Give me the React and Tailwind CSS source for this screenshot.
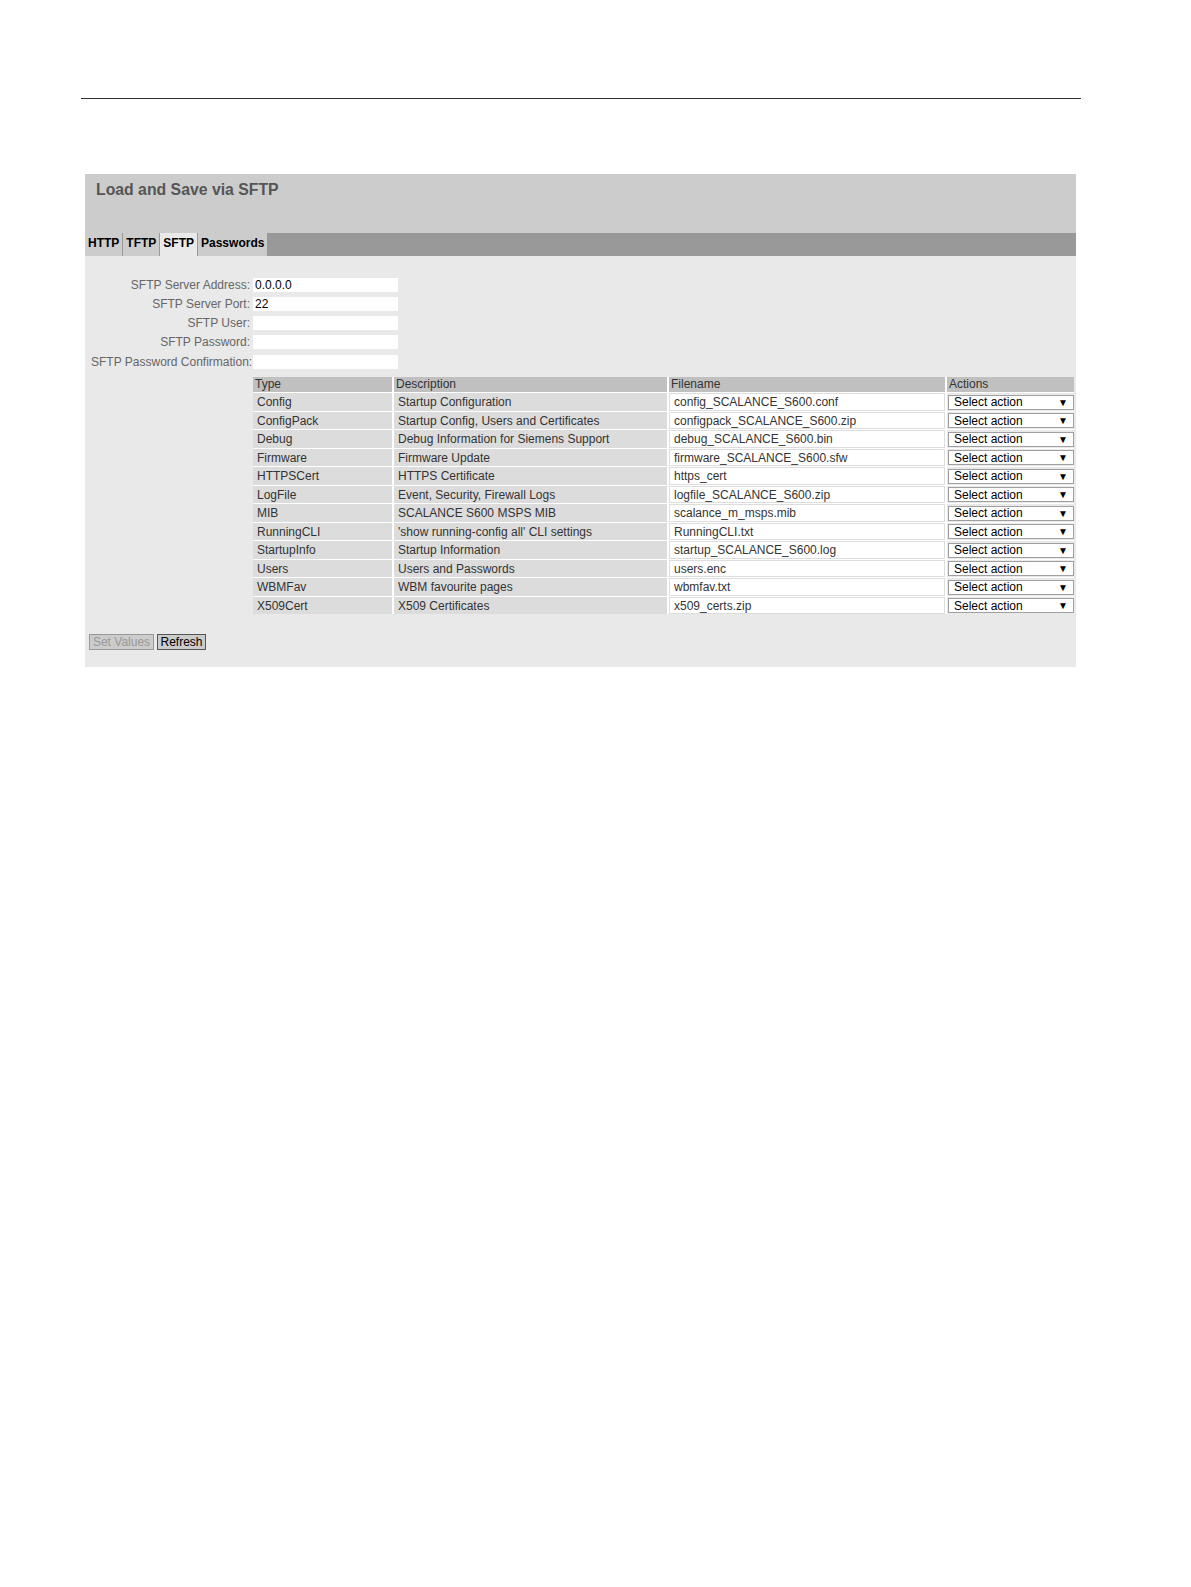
const rows = [
  ["Config", "Startup Configuration", "config_SCALANCE_S600.conf"],
  ["ConfigPack", "Startup Config, Users and Certificates", "configpack_SCALANCE_S600.zip"],
  ["Debug", "Debug Information for Siemens Support", "debug_SCALANCE_S600.bin"],
  ["Firmware", "Firmware Update", "firmware_SCALANCE_S600.sfw"],
  ["HTTPSCert", "HTTPS Certificate", "https_cert"],
  ["LogFile", "Event, Security, Firewall Logs", "logfile_SCALANCE_S600.zip"],
  ["MIB", "SCALANCE S600 MSPS MIB", "scalance_m_msps.mib"],
  ["RunningCLI", "'show running-config all' CLI settings", "RunningCLI.txt"],
  ["StartupInfo", "Startup Information", "startup_SCALANCE_S600.log"],
  ["Users", "Users and Passwords", "users.enc"],
  ["WBMFav", "WBM favourite pages", "wbmfav.txt"],
  ["X509Cert", "X509 Certificates", "x509_certs.zip"],
]

const fields = [
  ["SFTP Server Address:", "0.0.0.0"],
  ["SFTP Server Port:", "22"],
  ["SFTP User:", ""],
  ["SFTP Password:", ""],
  ["SFTP Password Confirmation:", ""],
]

function App() {
  return (
    <div className="w-full bg-white font-['Liberation_Sans',Arial,sans-serif]">
      <div className="pt-[98px] pl-[81px]">
        <div className="w-[1000px] h-px bg-[#333]" />
      </div>

      {/* Panel */}
      <div className="mt-[75px] ml-[85px] w-[991px]">
        <div className="h-[59px] bg-[#cccccc] pl-[11px] pt-[4px]">
          <h1 className="text-[15.8px] font-bold text-[#555]">Load and Save via SFTP</h1>
        </div>

        <div className="h-[23px] bg-[#999999] flex gap-[1px] text-[12px] font-bold text-black">
          {["HTTP", "TFTP", "SFTP", "Passwords"].map((t) => (
            <div key={t}
              className={(t === "SFTP" ? "bg-[#e9e9e9]" : "bg-[#cccccc]") + " h-full px-[3px] pt-[3px] leading-[14px]"}>
              {t}
            </div>
          ))}
        </div>

        <div className="bg-[#e9e9e9] pt-[19px] pb-[17px]">
          {/* Form */}
          <div className="flex flex-col">
            {fields.map(([label, val]) => (
              <div key={label} className="h-[19.25px] flex items-center">
                <span className="w-[165px] pl-[6px] text-right text-[12px] text-[#666] whitespace-nowrap">{label}</span>
                <div className="ml-[3px] w-[145px] h-[14px] bg-white text-[12px] text-black leading-[14px] pl-[2px]">{val}</div>
              </div>
            ))}
          </div>

          {/* Table */}
          <div className="ml-[168px] mt-[6px] w-[821px] bg-white grid grid-cols-[139px_273px_276px_127px] gap-x-[2px] gap-y-[1px] text-[12px] text-[#333]">
            {["Type", "Description", "Filename", "Actions"].map((h) => (
              <div key={h} className="bg-[#c0c0c0] h-[15px] leading-[15px] pl-[2px]">{h}</div>
            ))}
            {rows.map(([type, desc, file]) => (
              <>
                <div key={type + "t"} className="bg-[#dcdcdc] h-[17.5px] flex items-center pl-[4px]">{type}</div>
                <div key={type + "d"} className="bg-[#dcdcdc] h-[17.5px] flex items-center pl-[4px]">{desc}</div>
                <div key={type + "f"} className="bg-white h-[17.5px] flex items-center pl-[4px] border border-[#ddd]">{file}</div>
                <div key={type + "a"} className="bg-[#e9e9e9] h-[17.5px] flex items-center">
                  <div className="ml-[1px] w-[126px] h-[15px] bg-white border border-[#a0a0a0] flex items-center justify-between pl-[5px] pr-[5px] text-black">
                    <span>Select action</span>
                    <span className="text-[10px]">▼</span>
                  </div>
                </div>
              </>
            ))}
          </div>

          {/* Buttons */}
          <div className="mt-[19.5px] ml-[4px] flex gap-[3px] text-[12px]">
            <button className="h-[16px] w-[65px] bg-[#cccccc] border border-[#999] text-[#999] leading-[14px]">Set Values</button>
            <button className="h-[16px] w-[49px] bg-[#cccccc] border border-[#555] text-black leading-[14px]">Refresh</button>
          </div>
        </div>
      </div>
    </div>
  )
}

export default App
